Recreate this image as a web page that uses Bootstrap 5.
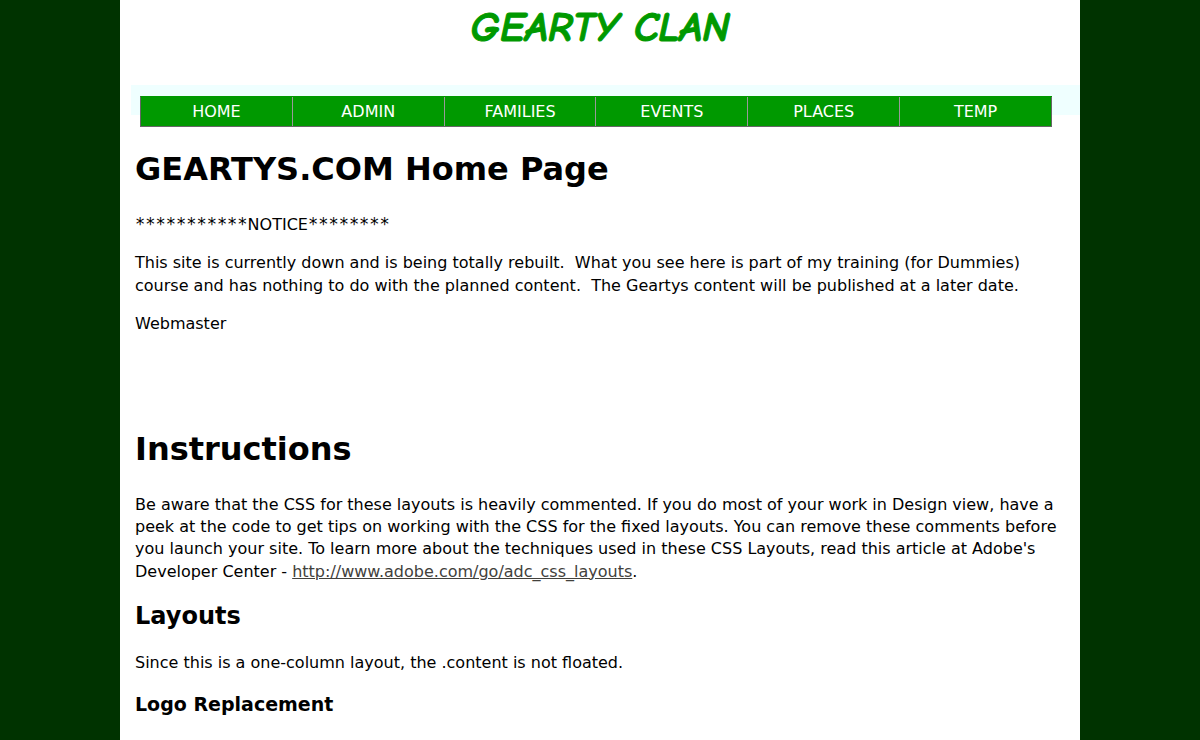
<!DOCTYPE html>
<html lang="en">
<head>
<meta charset="utf-8">
<meta name="viewport" content="width=device-width, initial-scale=1">
<title>Gearty Clan</title>
<link href="https://cdn.jsdelivr.net/npm/bootstrap@5.3.0/dist/css/bootstrap.min.css" rel="stylesheet">
<style>
  body { background: #003300; color: #000; font-family: "DejaVu Sans", Verdana, sans-serif; font-size: 16px; line-height: 1.4; }
  .page { width: 80%; min-height: 100vh; background: #fff; }
  .masthead { height: 85px; padding-top: 3px; }
  .site-name { font: italic bold 42px/50px "Comic Neue", "Comic Sans MS", "Liberation Sans", sans-serif; color: #090; -webkit-text-stroke: 1px #090; }
  .menu-band { height: 30px; margin-left: 11px; padding: 11px 28px 0 9px; background: #efffff; }
  .menu { border: 1px solid #666; border-top-color: #090; border-right: 0; background: #090; }
  .menu li { flex: 1 1 0; border-right: 1px solid #999; }
  .menu li:last-child { border-right-color: #666; }
  .menu a { display: block; padding: 4px 0 3px; color: #fff; text-align: center; text-decoration: none; }
  .copy { padding: 32px 15px 20px; }
  .copy h1 { font-size: 32px; line-height: 45px; font-weight: 700; margin: 0 0 22px; }
  .copy h2 { font-size: 24px; line-height: 34px; font-weight: 700; margin: 0 0 19px; }
  .copy h3 { font-size: 19px; line-height: 26px; font-weight: 700; margin: 0; }
  .copy p { margin: 0 0 16px; }
  .copy a { color: #42413c; }
  .stars { font: 17px/16px "DejaVu Sans Mono", monospace; }
  .instructions { margin-top: 91px; }
</style>
</head>
<body>
<div class="page mx-auto">
  <header class="masthead text-center"><div class="site-name">GEARTY CLAN</div></header>
  <nav class="menu-band" aria-label="Main">
    <ul class="menu d-flex list-unstyled mb-0">
      <li><a href="#">HOME</a></li>
      <li><a href="#">ADMIN</a></li>
      <li><a href="#">FAMILIES</a></li>
      <li><a href="#">EVENTS</a></li>
      <li><a href="#">PLACES</a></li>
      <li><a href="#">TEMP</a></li>
    </ul>
  </nav>
  <main class="copy">
    <h1>GEARTYS.COM Home Page</h1>
    <p><span class="stars">***********</span>NOTICE<span class="stars">********</span></p>
    <p>This site is currently down and is being totally rebuilt.&nbsp; What you see here is part of my training (for Dummies) course and has nothing to do with the planned content.&nbsp; The Geartys content will be published at a later date.</p>
    <p>Webmaster</p>
    <section class="instructions">
      <h1>Instructions</h1>
      <p>Be aware that the CSS for these layouts is heavily commented. If you do most of your work in Design view, have a peek at the code to get tips on working with the CSS for the fixed layouts. You can remove these comments before you launch your site. To learn more about the techniques used in these CSS Layouts, read this article at Adobe's Developer Center - <a href="http://www.adobe.com/go/adc_css_layouts">http://www.adobe.com/go/adc_css_layouts</a>.</p>
      <h2>Layouts</h2>
      <p>Since this is a one-column layout, the .content is not floated.</p>
      <h3>Logo Replacement</h3>
    </section>
  </main>
</div>
<script src="https://cdn.jsdelivr.net/npm/bootstrap@5.3.0/dist/js/bootstrap.bundle.min.js"></script>
</body>
</html>
